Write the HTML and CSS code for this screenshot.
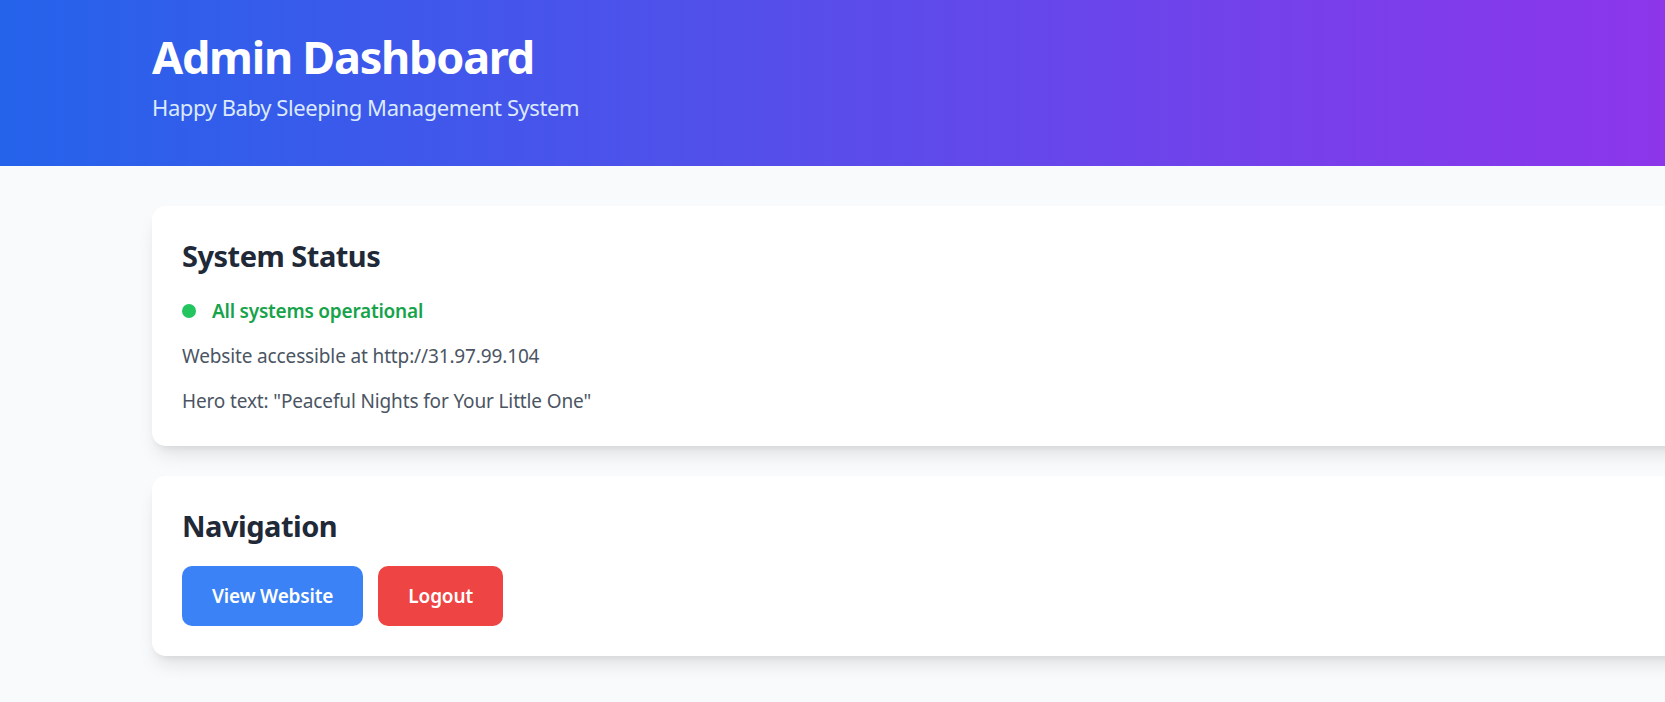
FILE: index.html
```html
<!DOCTYPE html>
<html lang="en">
<head>
<meta charset="utf-8">
<title>Admin Dashboard</title>
<link rel="stylesheet" href="styles.css">
</head>
<body>
  <header class="header">
    <h1 class="title">Admin Dashboard</h1>
    <p class="subtitle">Happy Baby Sleeping Management System</p>
  </header>
  <main class="main">
    <section class="card">
      <h2 class="card-title">System Status</h2>
      <div class="status-row">
        <span class="dot"></span>
        <span class="status-text">All systems operational</span>
      </div>
      <p class="info">Website accessible at http://31.97.99.104</p>
      <p class="info">Hero text: "Peaceful Nights for Your Little One"</p>
    </section>
    <section class="card">
      <h2 class="card-title">Navigation</h2>
      <div class="buttons">
        <a class="btn btn-blue" href="#">View Website</a>
        <a class="btn btn-red" href="#">Logout</a>
      </div>
    </section>
  </main>
</body>
</html>
```

FILE: styles.css
```css
html, body {
  margin: 0;
  padding: 0;
  overflow-x: hidden;
}
body {
  background: #f9fafb;
  font-family: "Noto Sans", "Open Sans", sans-serif;
  color: #1f2937;
}
.header {
  background: linear-gradient(to right, #2563eb 0%, #9333ea 106%);
  padding: 32px 0 40px 152px;
  height: 94px;
}
.title {
  margin: 0;
  font-size: 45px;
  line-height: 50px;
  font-weight: 700;
  letter-spacing: -1.25px;
  color: #ffffff;
}
.subtitle {
  margin: 8px 0 0 0;
  font-size: 22px;
  line-height: 35px;
  letter-spacing: -0.42px;
  color: #dbeafe;
}
.main {
  padding: 40px 0 36px 152px;
}
.card {
  background: #ffffff;
  border-radius: 14px;
  padding: 30px;
  margin-right: -200px;
  margin-bottom: 30px;
  box-shadow: 0 12px 18px -4px rgba(0, 0, 0, 0.1), 0 5px 8px -5px rgba(0, 0, 0, 0.1);
}
.card:last-child {
  margin-bottom: 0;
}
.card-title {
  margin: 0 0 20px 0;
  font-size: 29px;
  line-height: 40px;
  font-weight: 700;
  letter-spacing: -0.5px;
  color: #1f2937;
}
.status-row {
  display: flex;
  align-items: center;
  gap: 16px;
  height: 30px;
  margin-bottom: 15px;
}
.dot {
  width: 14px;
  height: 14px;
  border-radius: 50%;
  background: #22c55e;
  flex: none;
}
.status-text {
  font-size: 19px;
  line-height: 30px;
  font-weight: 600;
  letter-spacing: -0.22px;
  color: #16a34a;
}
.info {
  margin: 0 0 15px 0;
  font-size: 19px;
  line-height: 30px;
  letter-spacing: -0.14px;
  color: #4b5563;
}
.info:last-child {
  margin-bottom: 0;
}
.buttons {
  display: flex;
  gap: 15px;
}
.btn {
  display: block;
  padding: 15px 30px;
  font-size: 19px;
  line-height: 30px;
  font-weight: 600;
  letter-spacing: -0.15px;
  color: #ffffff;
  text-decoration: none;
  border-radius: 10px;
}
.btn-blue {
  background: #3b82f6;
}
.btn-red {
  background: #ef4444;
}
```
